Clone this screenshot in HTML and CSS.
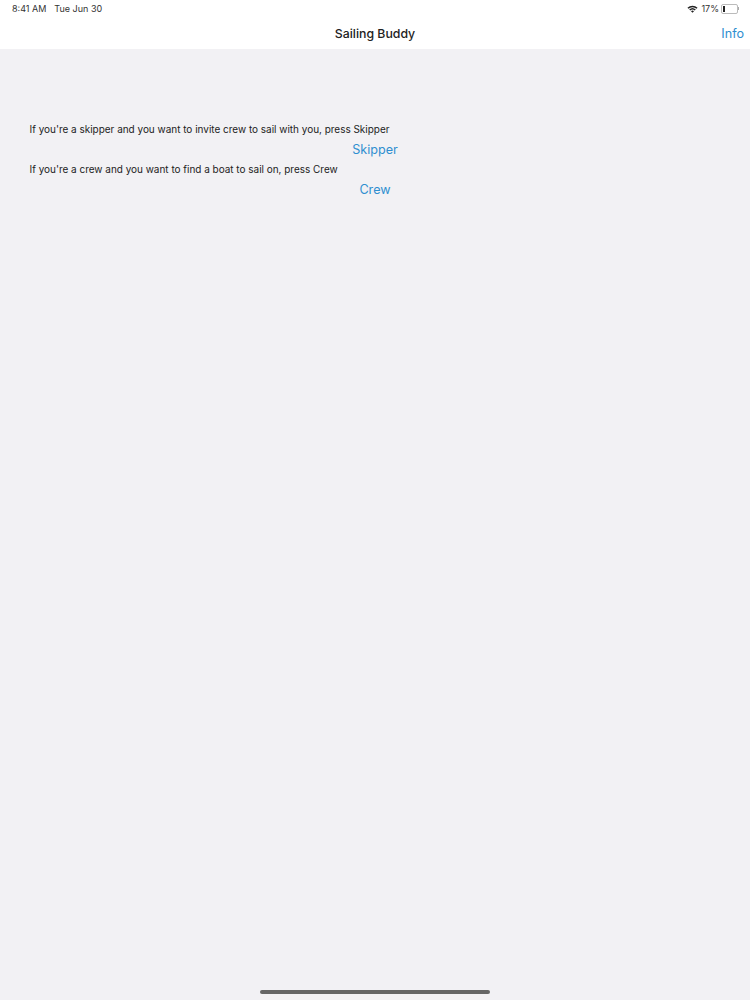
FILE: index.html
```html
<!DOCTYPE html>
<html lang="en">
<head>
  <meta charset="UTF-8">
  <meta name="viewport" content="width=device-width, initial-scale=1.0">
  <title>Sailing Buddy</title>
  <link rel="stylesheet" href="styles.css">
</head>
<body>
  <div class="header">
    <div class="status-bar">
      <div class="status-left">
        <span>8:41 AM</span>
        <span>Tue Jun 30</span>
      </div>
      <div class="status-right">
        <svg class="wifi" viewBox="0 0 12 9" width="11" height="8">
          <path d="M0.3 3.1A8.2 8.2 0 0 1 11.7 3.1L10.5 4.3A6.5 6.5 0 0 0 1.5 4.3Z"/>
          <path d="M2.3 5.1A5.4 5.4 0 0 1 9.7 5.1L8.5 6.3A3.7 3.7 0 0 0 3.5 6.3Z"/>
          <path d="M4.3 7.1A2.5 2.5 0 0 1 7.7 7.1L6 8.8Z"/>
        </svg>
        <span>17%</span>
        <div class="battery"><div class="battery-level"></div></div>
        <div class="battery-cap"></div>
      </div>
    </div>
    <div class="nav-bar">
      <div class="nav-title">Sailing Buddy</div>
      <a class="nav-link">Info</a>
    </div>
  </div>

  <div class="content">
    <p class="prompt">If you're a skipper and you want to invite crew to sail with you, press Skipper</p>
    <button class="action">Skipper</button>
    <p class="prompt">If you're a crew and you want to find a boat to sail on, press Crew</p>
    <button class="action">Crew</button>
  </div>

  <div class="home-bar"></div>
</body>
</html>
```

FILE: styles.css
```css
html, body {
  height: 100%;
}
body {
  margin: 0;
  height: 1000px;
  overflow: hidden;
  display: flex;
  flex-direction: column;
  font-family: Inter, "Liberation Sans", sans-serif;
  background-color: #f2f1f4;
  color: #111;
}
/* top bars */
.header {
  background: #fff;
  height: 49px;
  flex-shrink: 0;
}
.status-bar {
  height: 17px;
  display: flex;
  justify-content: space-between;
  align-items: center;
  padding: 0 12px;
  font-size: 9px;
  color: #333;
}
.status-left {
  display: flex;
  gap: 8px;
}
.status-right {
  display: flex;
  align-items: center;
  gap: 2px;
  margin-right: -1px;
}
.wifi {
  fill: #222;
  margin-right: 1px;
}
.battery {
  width: 13px;
  height: 6px;
  border: 1px solid #bbb;
  border-radius: 2px;
  padding: 1px;
}
.battery-level {
  width: 2px;
  height: 100%;
  background: #222;
}
.battery-cap {
  width: 1px;
  height: 3px;
  margin-left: -2px;
  background: #aaa;
}
.nav-bar {
  height: 32px;
  display: flex;
  justify-content: center;
  align-items: center;
  position: relative;
}
.nav-title {
  font-size: 12.3px;
  font-weight: 500;
  color: #222;
}
.nav-link {
  position: absolute;
  right: 6px;
  top: 9px;
  font-size: 12.6px;
  color: #2f8fd0;
}
/* main text */
.content {
  flex: 1;
  padding: 71px 29.5px 0;
}
.prompt {
  margin: 0;
  height: 18px;
  line-height: 18px;
  font-size: 9.96px;
  color: #222;
}
.action {
  display: block;
  width: 100%;
  height: 22px;
  padding: 1px 0 0;
  border: none;
  background: none;
  text-align: center;
  font-family: inherit;
  font-size: 12.6px;
  color: #2f8fd0;
  cursor: pointer;
}
.home-bar {
  width: 230px;
  height: 4px;
  margin: 0 auto 6px;
  border-radius: 2px;
  background: #666;
  flex-shrink: 0;
}
```
